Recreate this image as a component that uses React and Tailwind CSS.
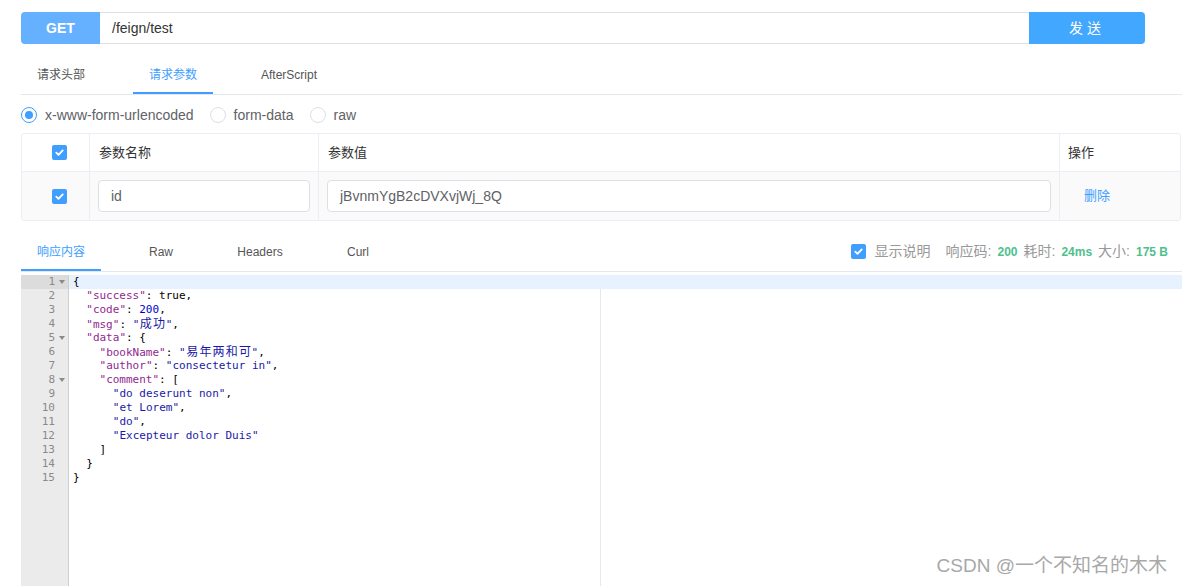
import React from "react";

const ui = { fontFamily: '"Liberation Sans", "Noto Sans CJK SC", sans-serif' };
const mono = { fontFamily: '"DejaVu Sans Mono", "Noto Sans CJK SC", monospace' };

const Check = ({ className = "" }) => (
  <span className={`inline-flex h-[15px] w-[15px] items-center justify-center rounded-[2px] bg-[#409eff] ${className}`}>
    <svg viewBox="0 0 12 12" className="h-[11px] w-[11px]" fill="none" stroke="white" strokeWidth="2" strokeLinecap="round" strokeLinejoin="round">
      <path d="M2.5 6.2l2.4 2.3 4.6-4.8" />
    </svg>
  </span>
);

const Radio = ({ checked, label }) => (
  <label className="flex items-center gap-[8px] text-[14px] text-[#606266]">
    <span
      className={`flex h-[16px] w-[16px] items-center justify-center rounded-full border ${
        checked ? "border-[#409eff]" : "border-[#dcdfe6]"
      }`}
    >
      {checked && <span className="h-[8px] w-[8px] rounded-full bg-[#409eff]" />}
    </span>
    {label}
  </label>
);

// wide chars take two columns in the editor
const Wide = ({ s }) =>
  s.split("").map((c, i) =>
    /[\u4e00-\u9fff]/.test(c) ? (
      <span key={i} className="inline-block w-[13.2px] text-center text-[12px]">{c}</span>
    ) : (
      <span key={i}>{c}</span>
    )
  );

// code token helpers
const K = ({ s }) => <span className="text-[#92278f]">"{s}"</span>;
const S = ({ s }) => (
  <span className="text-[#1a1aa6]">
    "<Wide s={s} />"
  </span>
);
const N = ({ s }) => <span className="text-[#0000cd]">{s}</span>;

const lines = [
  { fold: true, el: <>{"{"}</> },
  { el: <>{"  "}<K s="success" />: true,</> },
  { el: <>{"  "}<K s="code" />: <N s="200" />,</> },
  { el: <>{"  "}<K s="msg" />: <S s="成功" />,</> },
  { fold: true, el: <>{"  "}<K s="data" />: {"{"}</> },
  { el: <>{"    "}<K s="bookName" />: <S s="易年两和可" />,</> },
  { el: <>{"    "}<K s="author" />: <S s="consectetur in" />,</> },
  { fold: true, el: <>{"    "}<K s="comment" />: [</> },
  { el: <>{"      "}<S s="do deserunt non" />,</> },
  { el: <>{"      "}<S s="et Lorem" />,</> },
  { el: <>{"      "}<S s="do" />,</> },
  { el: <>{"      "}<S s="Excepteur dolor Duis" /></> },
  { el: <>{"    "}]</> },
  { el: <>{"  "}{"}"}</> },
  { el: <>{"}"}</> },
];

const App = () => {
  return (
    <div className="relative h-[586px] w-[1182px] overflow-hidden bg-white" style={ui}>
      {/* request bar */}
      <div className="ml-[21px] mt-[12px] flex h-[32px] w-[1124px]">
        <div className="flex w-[79px] items-center justify-center rounded-l-[4px] bg-[#66b1ff] text-[14px] font-bold text-white">
          GET
        </div>
        <div className="flex flex-1 items-center border-y border-[#dcdfe6] px-[12px] text-[14px] text-[#333]">
          /feign/test
        </div>
        <button className="flex w-[116px] items-center justify-center rounded-r-[4px] bg-[#42a7ff] text-[14px] tracking-[4px] text-white">
          发送
        </button>
      </div>

      {/* request tabs */}
      <div className="ml-[21px] mt-[12px] flex h-[39px] border-b border-[#e4e7ed] text-[12px]">
        <div className="flex w-[80px] items-center justify-center text-[#555]">请求头部</div>
        <div className="ml-[32px] flex w-[80px] items-center justify-center text-[#409eff] shadow-[inset_0_-2px_0_#409eff]">请求参数</div>
        <div className="ml-[36px] flex w-[80px] items-center justify-center text-[#555]">AfterScript</div>
      </div>

      {/* body type */}
      <div className="ml-[21px] mt-[8px] flex h-[24px] items-center gap-[16px]">
        <Radio checked label="x-www-form-urlencoded" />
        <Radio label="form-data" />
        <Radio label="raw" />
      </div>

      {/* params table */}
      <div className="ml-[21px] mt-[6px] w-[1160px] overflow-hidden rounded-[3px] border border-[#ebeef5] text-[13px] text-[#333]">
        <div className="flex h-[38px] border-b border-[#ebeef5]">
          <div className="flex w-[68px] items-center justify-center border-r border-[#ebeef5] pl-[8px]">
            <Check />
          </div>
          <div className="flex w-[229px] items-center border-r border-[#ebeef5] px-[9px]">参数名称</div>
          <div className="flex w-[741px] items-center border-r border-[#ebeef5] px-[9px]">参数值</div>
          <div className="flex flex-1 items-center px-[8px]">操作</div>
        </div>
        <div className="flex h-[48px] bg-[#fafafa]">
          <div className="flex w-[68px] items-center justify-center border-r border-[#ebeef5] pl-[8px]">
            <Check />
          </div>
          <div className="flex w-[229px] items-center border-r border-[#ebeef5] px-[8px]">
            <div className="flex h-[32px] w-full items-center rounded-[4px] border border-[#dcdfe6] bg-white px-[12px] text-[14px] text-[#606266]">
              id
            </div>
          </div>
          <div className="flex w-[741px] items-center border-r border-[#ebeef5] px-[8px]">
            <div className="flex h-[32px] w-full items-center rounded-[4px] border border-[#dcdfe6] bg-white px-[12px] text-[14px] text-[#606266]">
              jBvnmYgB2cDVXvjWj_8Q
            </div>
          </div>
          <div className="flex flex-1 items-center pl-[24px] text-[#409eff]">删除</div>
        </div>
      </div>

      {/* response tabs */}
      <div className="ml-[21px] mt-[11px] flex h-[40px] items-stretch border-b border-[#e4e7ed] text-[12px]">
        <div className="flex w-[80px] items-center justify-center text-[#409eff] shadow-[inset_0_-2px_0_#409eff]">响应内容</div>
        <div className="ml-[20px] flex w-[80px] items-center justify-center text-[#555]">Raw</div>
        <div className="ml-[19px] flex w-[80px] items-center justify-center text-[#555]">Headers</div>
        <div className="ml-[18px] flex w-[80px] items-center justify-center text-[#555]">Curl</div>
        <div className="ml-auto mr-[14px] flex items-center text-[14px] text-[#999]">
          <Check className="mr-[9px]" />
          <span>显示说明</span>
          <span className="ml-[15px]">响应码:</span>
          <span className="ml-[6px] text-[12px] font-bold text-[#4fc08d]">200</span>
          <span className="ml-[6px]">耗时:</span>
          <span className="ml-[6px] text-[12px] font-bold text-[#4fc08d]">24ms</span>
          <span className="ml-[6px]">大小:</span>
          <span className="ml-[6px] text-[12px] font-bold text-[#4fc08d]">175 B</span>
        </div>
      </div>

      {/* editor */}
      <div className="ml-[21px] mt-[3px] flex h-[320px] text-[11px] leading-[14px]" style={mono}>
        <div className="w-[48px] border-r border-[#cfcfcf] bg-[#ebebeb] text-[#8a8a8a]">
          {lines.map((l, i) => (
            <div key={i} className={`flex h-[14px] items-center ${i === 0 ? "bg-[#dcdcdc]" : ""}`}>
              <span className="flex-1 text-right">{i + 1}</span>
              <span className="flex w-[13px] items-center pl-[4px]">
                {l.fold && (
                  <span className="h-0 w-0 border-x-[3px] border-t-[4px] border-x-transparent border-t-[#8a8a8a]" />
                )}
              </span>
            </div>
          ))}
        </div>
        <div className="relative flex-1 text-black">
          <div className="absolute bottom-0 left-[531px] top-0 w-px bg-[#e8e8e8]" />
          {lines.map((l, i) => (
            <div
              key={i}
              className={`relative h-[14px] whitespace-pre pl-[4px] ${i === 0 ? "bg-[#e8f2fe]" : ""}`}
            >
              {l.el}
            </div>
          ))}
        </div>
      </div>

      {/* watermark */}
      <div className="absolute bottom-[6px] right-[15px] text-[19px] text-[#a8a8a8]">CSDN @一个不知名的木木</div>
    </div>
  );
};

export default App;
